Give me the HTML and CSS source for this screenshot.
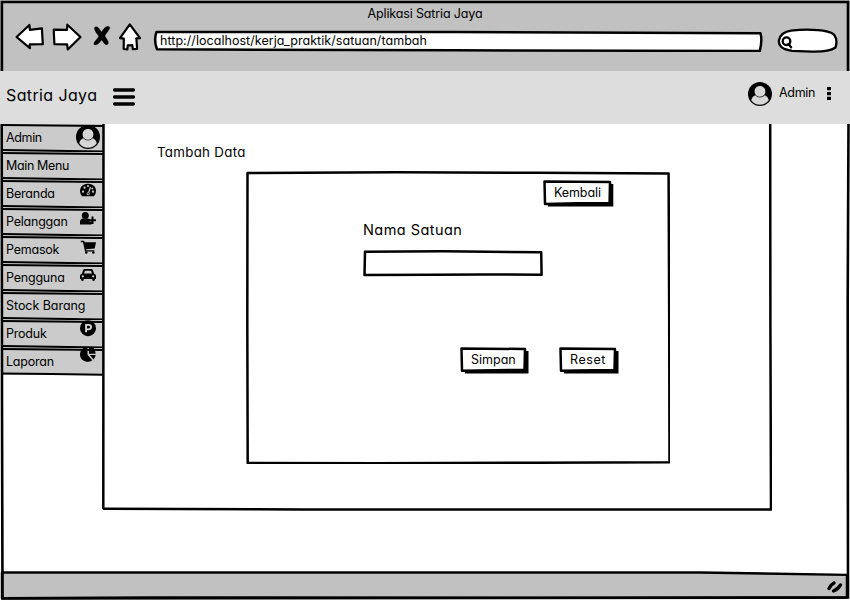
FILE: index.html
```html
<!DOCTYPE html>
<html lang="id">
<head>
<meta charset="utf-8">
<title>Aplikasi Satria Jaya</title>
<link rel="stylesheet" href="styles.css">
</head>
<body>
<svg class="symbols" width="0" height="0">
  <symbol id="avatar" viewBox="0 0 24 24"><circle cx="12" cy="12" r="12"/><path class="cut" d="M12 4.1c3.100 0 5.400 2.100 5.400 5.100s-2 5.500-5.400 5.500-5.400-2.500-5.400-5.500S8.900 4.100 12 4.100zM3.200 18.200c.6-2.500 2-4.200 4.200-5 2.400 3 6.800 3 9.200 0 2.200.8 3.600 2.500 4.200 5-4.300 6-13.300 6-17.600 0z"/></symbol>
</svg>
<div class="window">
  <header class="chrome">
    <div class="title"><span>Aplikasi Satria Jaya</span></div>
    <div class="toolbar">
      <svg class="nav" width="140" height="34" viewBox="12 20 140 34">
        <path d="M16.600 37L29.400 25l.5 4.800 12-1.400.9 15.800-13 .1.100 3.900z"/>
        <path d="M53.700 29.700l13.300.2.300-5.200L80.500 37 67.800 49.500l-.7-5.200-12.700-.1z"/>
        <path class="cross" d="M94.700 27.200c2.500-1.900 4.800 1.400 6.800 4.800 2.200-3.700 5.700-7.400 8-5 1.300 2.100-2.800 5.100-4.600 9 1.700 3.300 4.800 6 2.900 8.200-2.900 1.800-4.200-1.700-6.100-4.200-2.100 2.300-4.100 5.700-7.500 4.700-1.700-2.200 3.100-5.400 4.500-8.300-1.500-3.300-5.300-6-4-9.200z"/>
        <path d="M129.800 24.400L140 38.200l-3.600.2.700 10.400-4.300.3-.5-4-4.600.3-.3 3.900-3.700-.3.100-10.300-3.800-.5z"/>
      </svg>
      <div class="address">
        <svg class="sketch" viewBox="0 0 610 22" preserveAspectRatio="none"><path class="paper" d="M3.500 2L300 2.100 607.500 3.300Q609.500 10 606.800 21L300 20.300 4 19.300Q.5 10 3.500 2z"/></svg>
        <span>http://localhost/kerja_praktik/satuan/tambah</span>
      </div>
      <svg class="search" width="62" height="26" viewBox="776 28 62 26"><path d="M791 30.700Q805 29 818 30.200 829 31 834 34.500 838 40 835.500 47.500 829 52 812 51.600L792 50.800Q777.500 49 779 40 781 32 791 30.700z"/><circle cx="786.500" cy="41.200" r="3.800"/><path d="M788.500 44l2.600 3.300"/></svg>
    </div>
  </header>
  <div class="appbar">
    <span class="brand">Satria Jaya</span>
    <svg class="burger" width="22" height="18" viewBox="0 0 22 18"><path d="M1.500 2h19M1.500 9h19M1.500 16h19"/></svg>
    <div class="account">
      <svg width="24" height="24"><use href="#avatar"/></svg>
      <span>Admin</span>
      <svg class="dots" width="4" height="13" viewBox="0 0 4 13"><path d="M0 0h4v3.300H0zM0 4.900h4v3.300H0zM0 9.700h4V13H0z"/></svg>
    </div>
  </div>
  <div class="body">
    <nav class="sidebar">
      <a class="item"><svg class="sketch" viewBox="0 0 101 28"><path d="M0 1L101 2M0 26L50 26.700 101 27.600"/></svg><span class="tight">Admin</span><svg class="icon big" width="24" height="24"><use href="#avatar"/></svg></a>
      <a class="item"><svg class="sketch" viewBox="0 0 101 28"><path d="M0 1L101 2M0 26L50 26.700 101 27.600"/></svg><span class="tight">Main Menu</span></a>
      <a class="item"><svg class="sketch" viewBox="0 0 101 28"><path d="M0 1L101 2M0 26L50 26.700 101 27.600"/></svg><span>Beranda</span><svg class="icon" width="16" height="17" viewBox="0 0 16 17"><path d="M2 16.300C-2.400 10 1 3.800 8 3.800s10.400 6.200 6 12.500z"/><g class="cut"><circle cx="3" cy="11.700" r="1.100"/><circle cx="4.600" cy="7.700" r="1.100"/><circle cx="8" cy="6" r="1.100"/><circle cx="13" cy="11.700" r="1.100"/><circle cx="12.300" cy="8.500" r=".9"/></g><path class="line" d="M10.500 7L8.700 12.500"/><circle class="cut" cx="8.200" cy="13.800" r="1.500"/><circle cx="8.200" cy="13.800" r=".8"/></svg></a>
      <a class="item"><svg class="sketch" viewBox="0 0 101 28"><path d="M0 1L101 2M0 26L50 26.700 101 27.600"/></svg><span>Pelanggan</span><svg class="icon" width="16" height="17" viewBox="0 0 16 17"><circle cx="5.300" cy="7.600" r="3.500"/><path d="M0 16.500v-2.600Q.3 10.600 3 10.400q2.300 1.500 4.700 0l1.800.7v2.700h2v2.700zM11.500 8.500h2v2.800H16v2h-2.500v2.800h-2v-2.800H9v-2h2.500z"/></svg></a>
      <a class="item"><svg class="sketch" viewBox="0 0 101 28"><path d="M0 1L101 2M0 26L50 26.700 101 27.600"/></svg><span>Pemasok</span><svg class="icon" width="16" height="18" viewBox="0 0 16 18"><path d="M.8 4.800h3.300l.5 1.400H16l-1.300 6.300-8.700.8.300.9h8v1.300H5L3 6.200H.8z"/><circle cx="6.300" cy="16.500" r="1.300"/><circle cx="13.300" cy="16.500" r="1.300"/></svg></a>
      <a class="item"><svg class="sketch" viewBox="0 0 101 28"><path d="M0 1L101 2M0 26L50 26.700 101 27.600"/></svg><span>Pengguna</span><svg class="icon" width="16" height="18" viewBox="0 0 16 18"><path d="M1.800 9.700L3.200 6Q3.600 5 4.600 5h6.800q1 0 1.400 1l1.400 3.700Q16 10 16 12v3h-1.200v1.300q-1.200 1.600-2.500 0V15H3.700v1.300q-1.300 1.600-2.500 0V15H0v-3q0-2 1.800-2.300z"/><path class="cut" d="M4 9.500l1-2.800h6l1 2.800z"/><circle class="cut" cx="2.800" cy="12.400" r="1.100"/><circle class="cut" cx="13.200" cy="12.400" r="1.100"/></svg></a>
      <a class="item"><svg class="sketch" viewBox="0 0 101 28"><path d="M0 1L101 2M0 26L50 26.700 101 27.600"/></svg><span class="even">Stock Barang</span></a>
      <a class="item"><svg class="sketch" viewBox="0 0 101 28"><path d="M0 1L101 2M0 26L50 26.700 101 27.600"/></svg><span>Produk</span><svg class="icon" width="16" height="17" viewBox="0 0 16 17"><circle cx="8" cy="8.200" r="8"/><path class="ring" d="M6.100 12.300V4.800h2.700a2.200 2.200 0 0 1 0 4.500H6.100"/></svg></a>
      <a class="item"><svg class="sketch" viewBox="0 0 101 28"><path d="M0 1L101 2M0 25.500L50 26 101 26.700"/></svg><span>Laporan</span><svg class="icon" width="16" height="15" viewBox="0 0 16 15"><path d="M7.500 0v6.700l4.800 5.500Q9.500 14.300 6.500 13.700C2.500 13 0 10 0 6.500 0 3.500 1.800 1 3.500 0z"/><path d="M9 0h4.500Q15.500 2 15.700 5.700H9zM9.800 7h5.900q-.3 2.600-2.200 4.400z"/></svg></a>
    </nav>
    <main class="panel">
      <svg class="sketch" viewBox="0 0 670 388" preserveAspectRatio="none"><path d="M1.500 0L1.300 383.500Q1.200 385 3 384.800L200 385.400 669 385.600 668.400 200 668.200 0"/></svg>
      <h1>Tambah Data</h1>
      <section class="card">
        <svg class="sketch" viewBox="0 0 424 293"><path d="M1.500 2L150 1.300 290 1.800 422.600 2.400 423.200 150 423.500 291.200 290 291.700 130 292.200 1.700 292 1.300 150z"/></svg>
        <button class="btn back"><svg class="sketch" viewBox="0 0 71 27"><path class="shadow" d="M5 4H70.300V26.500H5z"/><path class="paper" d="M1.500 1.500L67 2 66.600 23 35 23.200 2 24z"/></svg><span>Kembali</span></button>
        <label for="nama">Nama Satuan</label>
        <div class="field"><svg class="sketch" viewBox="0 0 180 27"><path class="paper" d="M2 1.800L80 1.300 178.200 2.200 178.600 24.800 120 24.400 70 24.800 1.500 24.900z"/></svg><input id="nama" type="text"></div>
        <div class="actions">
          <button class="btn save"><svg class="sketch" viewBox="0 0 69 27"><path class="shadow" d="M5 4H68.500V26.500H5z"/><path class="paper" d="M1.500 1.500L65 2 64.500 23 35 23.200 2 23.800z"/></svg><span>Simpan</span></button>
          <button class="btn reset"><svg class="sketch" viewBox="0 0 60 27"><path class="shadow" d="M5 4H59.500V26.500H5z"/><path class="paper" d="M1.500 1.500L56 2 55.500 23 35 23.200 2 23.800z"/></svg><span>Reset</span></button>
        </div>
      </section>
    </main>
  </div>
  <footer class="status">
    <svg class="sketch" viewBox="0 0 850 30" preserveAspectRatio="none"><path class="fill" d="M2 1.600L700 1.500 847 4V27.500L2 28.500z"/></svg>
    <svg class="grip" width="18" height="15" viewBox="0 0 18 15"><path d="M3 9.500q2-4 5-5.500M7.500 12q4-1.500 7-6"/></svg>
  </footer>
  <svg class="edges" viewBox="0 0 850 600"><path d="M1.900 71V2H848V71M848.500 124L847.700 300 848 597.500 600 597.800 150 597.500 2.500 598.300 2 400 1.700 124"/></svg>
</div>
</body>
</html>
```
FILE: styles.css
```css
* { box-sizing: border-box; }
body {
  margin: 0;
  font-family: Inter, "Liberation Sans", sans-serif;
  font-feature-settings: "cv11";
  font-size: 12.5px;
  line-height: 16px;
  color: #000;
}
.symbols { position: absolute; }
.window {
  position: relative;
  width: 850px;
  height: 600px;
  overflow: hidden;
  display: flex;
  flex-direction: column;
  background: #fff;
}
.edges {
  position: absolute;
  inset: 0;
  fill: none;
  stroke: #000;
  stroke-width: 2.6;
  pointer-events: none;
}
.sketch {
  position: absolute;
  left: 0;
  top: 0;
  width: 100%;
  height: 100%;
  fill: none;
  stroke: #000;
  stroke-width: 2.5;
  stroke-linejoin: round;
}
.sketch .paper { fill: #fff; }
.sketch .fill { fill: #c1c1c1; }
.sketch .shadow { fill: #000; stroke: none; }
span { position: relative; white-space: nowrap; }

.chrome { height: 71px; background: #c1c1c1; }
.title { height: 20px; padding-top: 6px; text-align: center; letter-spacing: -.15px; }
.toolbar { display: flex; padding-left: 12px; }
.nav { fill: #fff; stroke: #000; stroke-width: 2.2; stroke-linejoin: round; }
.nav .cross { fill: #000; stroke-width: .3; }
.address {
  position: relative;
  width: 610px;
  height: 22px;
  margin: 10px 0 0 1px;
  padding: 3px 0 0 7px;
  letter-spacing: .05px;
}
.search { margin: 8px 0 0 13px; fill: #fff; stroke: #000; stroke-width: 2.3; stroke-linecap: round; }

.appbar {
  position: relative;
  z-index: 1;
  flex: none;
  height: 53px;
  display: flex;
  align-items: flex-start;
  padding: 0 19px 0 6px;
  background: #ddd;
}
.brand { width: 107px; margin-top: 14px; font-size: 16px; line-height: 20px; letter-spacing: .38px; }
.burger { margin-top: 17px; stroke: #000; stroke-width: 3.3; stroke-linecap: round; }
.account { display: flex; margin: 11px 0 0 auto; letter-spacing: -.3px; }
.account span { width: 36px; margin: 3px 12px 0 7px; }
.dots { margin-top: 5px; }
.cut { fill: #d6d6d6; }

.body { flex: none; display: flex; height: 447px; padding-left: 2px; }
.sidebar { width: 101px; letter-spacing: -.22px; }
.tight { letter-spacing: -.35px; }
.even { letter-spacing: -.05px; }
.item {
  position: relative;
  display: flex;
  justify-content: space-between;
  height: 28px;
  padding: 6px 6px 0 4px;
  background: #cbcbcb;
}
.item:last-child { height: 27px; }
.item .sketch { height: 28px; stroke-width: 2; }
.icon { position: relative; margin-top: -6px; margin-right: 1px; }
.icon.big { margin-top: -5px; margin-right: -3px; }
.icon .cut { fill: #cbcbcb; }
.icon .line { stroke: #cbcbcb; stroke-width: 1.2; }
.icon .ring { fill: none; stroke: #ddd; stroke-width: 1.8; }

.panel { position: relative; width: 670px; height: 388px; padding: 20px 0 0 54px; margin-left: -1px; }
h1 { position: relative; margin: 0 0 0 1px; font-size: 13.3px; line-height: 16px; font-weight: 400; letter-spacing: .3px; }
.card { position: relative; width: 424px; height: 293px; margin: 11px 0 0 90px; padding: 9px 0 0 117px; }
.btn {
  position: relative;
  display: block;
  height: 27px;
  padding: 0 0 1px 11px;
  border: 0;
  background: none;
  font: inherit;
  font-feature-settings: inherit;
  text-align: left;
  color: #000;
}
.back { width: 71px; margin-left: 180px; letter-spacing: -.1px; }
.save { width: 69px; }
.reset { width: 60px; letter-spacing: .55px; }
label { position: relative; display: block; margin-top: 13px; font-size: 14.5px; line-height: 20px; letter-spacing: .45px; }
.field { position: relative; width: 180px; height: 27px; margin-top: 10px; }
input { position: relative; display: block; width: 174px; height: 20px; margin: 0 3px; border: 0; background: none; outline: 0; }
.field input { top: 3px; }
.actions { display: flex; gap: 30px; margin: 70px 0 0 97px; }
.status { position: relative; flex: none; height: 29px; padding: 8px 0 0 826px; }
.grip { position: relative; display: block; stroke: #000; stroke-width: 3.4; stroke-linecap: round; fill: none; }
```
